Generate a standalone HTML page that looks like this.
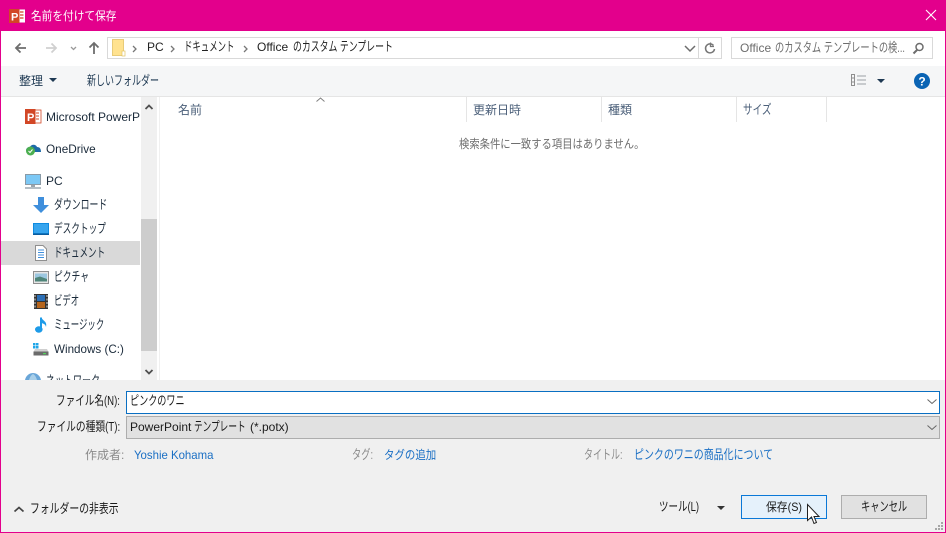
<!DOCTYPE html>
<html lang="ja"><head><meta charset="utf-8"><style>
html,body{margin:0;padding:0;width:946px;height:533px;overflow:hidden;background:#fff}
body{position:relative;font-family:"Liberation Sans","Noto Sans CJK JP",sans-serif;font-size:12px;color:#1a1a1a}
.a{position:absolute}
.t{position:absolute;white-space:nowrap;line-height:16px;height:16px;transform-origin:0 50%}
.k{font-size:13px}
svg{position:absolute;overflow:visible}
</style></head><body>
<!-- window frame -->
<div class="a" style="left:0;top:0;width:946px;height:31px;background:#e3008c"></div>
<div class="a" style="left:0;top:0;width:1px;height:533px;background:#e3008c"></div>
<div class="a" style="right:0;top:0;width:1px;height:533px;background:#e3008c"></div>
<div class="a" style="left:0;top:532px;width:946px;height:1px;background:#e3008c"></div>
<!-- title bar -->
<svg style="left:9px;top:8px" width="16" height="16"><rect x="6" y="1.500" width="10" height="13" fill="#fff"/><path d="M11 4h3.500M11 7h3.500M11 10h3.500" stroke="#d24726" stroke-width="1.200"/><rect x="0" y="1" width="10.500" height="14" fill="#d24726"/><text x="2" y="12.500" font-size="11" font-weight="bold" fill="#fff" font-family="Liberation Sans">P</text></svg>
<div class="t" style="left:31px;top:8px;color:#fff;transform:scaleX(.89)">名前を付けて保存</div>
<svg style="left:925px;top:9px" width="12" height="12"><path d="M1 1L11 11M11 1L1 11" stroke="#fff" stroke-width="1.100"/></svg>
<!-- nav -->
<svg style="left:14px;top:41px" width="100" height="14"><path d="M12 7H2M6.500 2.500L2 7l4.500 4.500" stroke="#6d6d6d" stroke-width="1.800" fill="none"/><path d="M32 7H42M37.500 2.500L42 7l-4.500 4.500" stroke="#d0d0d0" stroke-width="1.800" fill="none"/><path d="M57 6l2.500 2.500L62 6" stroke="#9a9a9a" stroke-width="1.300" fill="none"/><path d="M80 13V2M75.500 6.500L80 2l4.500 4.500" stroke="#6d6d6d" stroke-width="1.800" fill="none"/></svg>
<div class="a" style="left:107px;top:37px;width:591px;height:20px;border:1px solid #d9d9d9;background:#fff"></div>
<div class="a" style="left:698px;top:37px;width:22px;height:20px;border:1px solid #d9d9d9;background:#fff"></div>
<svg style="left:112px;top:39px" width="13" height="17"><path d="M0.500 0.500H11.500V16.500H0.500Z" fill="#ffe28f" stroke="#e8cb78"/><rect x="10" y="12" width="3" height="5" fill="#fff" stroke="#e3c463" stroke-width=".7"/></svg>
<svg style="left:132px;top:44px" width="260" height="10"><path d="M1 2l3 3-3 3" stroke="#777" stroke-width="1.300" fill="none"/><path d="M39 2l3 3-3 3" stroke="#777" stroke-width="1.300" fill="none"/><path d="M112 2l3 3-3 3" stroke="#777" stroke-width="1.300" fill="none"/></svg>
<div class="t" style="left:147px;top:39px;color:#222">PC</div>
<div class="t k" style="left:184px;top:39px;color:#222;transform:scaleX(.646)">ドキュメント</div>
<div class="t" style="left:257px;top:39px;color:#222">Office</div>
<div class="t k" style="left:293px;top:39px;color:#222;transform:scaleX(.683)">のカスタム テンプレート</div>
<svg style="left:684px;top:45px" width="12" height="8"><path d="M1 1l5 5 5-5" stroke="#6d6d6d" stroke-width="1.500" fill="none"/></svg>
<svg style="left:704px;top:42px" width="12" height="12"><path d="M9.500 3.500A4.500 4.500 0 1 0 10.500 7" stroke="#777" stroke-width="1.500" fill="none"/><path d="M6.500 0.500V4.500H10" stroke="#777" stroke-width="1.300" fill="none"/></svg>
<div class="a" style="left:731px;top:37px;width:200px;height:20px;border:1px solid #d9d9d9;background:#fff"></div>
<div class="t" style="left:740px;top:40px;color:#6d6d6d">Office</div>
<div class="t k" style="left:775px;top:40px;color:#6d6d6d;transform:scaleX(.71)">のカスタム テンプレートの検...</div>
<svg style="left:912px;top:42px" width="14" height="14"><circle cx="7.500" cy="5" r="3.500" stroke="#6d6d6d" stroke-width="1.500" fill="none"/><path d="M5 8l-3.500 3.500" stroke="#6d6d6d" stroke-width="2"/></svg>
<!-- toolbar -->
<div class="a" style="left:1px;top:66px;width:944px;height:30px;background:#f5f6f7"></div>
<div class="a" style="left:1px;top:96px;width:944px;height:1px;background:#e5e5e5"></div>
<div class="t" style="left:19px;top:73px;color:#1e3953">整理</div>
<svg style="left:49px;top:78px" width="8" height="5"><path d="M0 0H8L4 4Z" fill="#1e3953"/></svg>
<div class="t k" style="left:87px;top:73px;color:#1e3953;transform:scaleX(.692)">新しいフォルダー</div>
<svg style="left:851px;top:74px" width="16" height="13"><rect x=".5" y=".5" width="3" height="11" fill="none" stroke="#8f8f8f"/><path d="M0 4H4M0 8H4" stroke="#8f8f8f"/><path d="M6 2H15M6 6H15M6 10H15" stroke="#9aa0a6"/></svg>
<svg style="left:877px;top:79px" width="8" height="5"><path d="M0 0H8L4 4Z" fill="#1e3953"/></svg>
<svg style="left:914px;top:73px" width="16" height="16"><circle cx="8" cy="8" r="8" fill="#0a64b4"/><text x="8" y="12.500" text-anchor="middle" font-size="12" font-weight="bold" fill="#fff" font-family="Liberation Sans">?</text></svg>
<!-- sidebar -->
<svg style="left:25px;top:108px" width="16" height="17"><rect x="6" y="2" width="10" height="13" fill="#fff" stroke="#d24726" stroke-width=".8"/><path d="M11 5h3M11 8h3M11 11h3" stroke="#d24726"/><rect x="0" y="1" width="10.500" height="15" fill="#d24726"/><text x="2" y="13" font-size="11" font-weight="bold" fill="#fff" font-family="Liberation Sans">P</text></svg>
<div class="t" style="left:46px;top:109px;width:94px;overflow:hidden;color:#1a2a3a">Microsoft PowerPoint</div>
<svg style="left:25px;top:142px" width="17" height="14"><path d="M1 9C1 6 3 5 5 5 6 2 11 2 12 5 15 5 16 7 16 10H3Z" fill="#1d6aa8"/><circle cx="5.500" cy="9" r="4.500" fill="#4caf50"/><path d="M3.500 9l1.500 1.500L7.500 7.500" stroke="#fff" fill="none"/></svg>
<div class="t" style="left:46px;top:141px;color:#1a2a3a;transform:scaleX(.98)">OneDrive</div>
<svg style="left:25px;top:174px" width="16" height="15"><rect x=".5" y=".5" width="15" height="10" fill="#7cc8f5" stroke="#8a9aa6"/><rect x="6" y="11" width="4" height="2" fill="#9aa5ad"/><rect x="0" y="13" width="16" height="2" fill="#b4bec5"/></svg>
<div class="t" style="left:46px;top:173px;color:#1a2a3a">PC</div>
<svg style="left:33px;top:197px" width="16" height="17"><path d="M5 0H11V8H16L8 16 0 8H5Z" fill="#3f8fdc"/></svg>
<div class="t k" style="left:54px;top:197px;color:#1a2a3a;transform:scaleX(.683)">ダウンロード</div>
<svg style="left:33px;top:223px" width="16" height="12"><rect x="0" y="0" width="16" height="12" fill="#0f8be0"/><rect x="1" y="1" width="14" height="9" fill="#37a5ee"/><rect x="0" y="10.500" width="16" height="1.500" fill="#0b5c9e"/></svg>
<div class="t k" style="left:54px;top:221px;color:#1a2a3a;transform:scaleX(.665)">デスクトップ</div>
<div class="a" style="left:1px;top:241px;width:139px;height:24px;background:#d9d9d9"></div>
<svg style="left:35px;top:245px" width="12" height="16"><path d="M.5.500H8L11.500 4V15.500H.5Z" fill="#fff" stroke="#8f8f8f"/><path d="M3 5H9M3 7.500H9M3 10H9M3 12.500H9" stroke="#3f8fdc"/></svg>
<div class="t k" style="left:54px;top:245px;color:#1a2a3a;transform:scaleX(.655)">ドキュメント</div>
<svg style="left:33px;top:271px" width="16" height="13"><rect x=".5" y=".5" width="15" height="12" fill="#e6e6e6" stroke="#8f8f8f"/><rect x="2" y="2.500" width="12" height="8" fill="#9cc7e0"/><path d="M2 7L7 5.500 14 8V10.500H2Z" fill="#4f8579"/></svg>
<div class="t k" style="left:54px;top:269px;color:#1a2a3a;transform:scaleX(.674)">ピクチャ</div>
<svg style="left:34px;top:294px" width="14" height="15"><rect width="14" height="15" fill="#333"/><rect x="3" y="1" width="8" height="6" fill="#2c6fb5"/><rect x="3" y="8" width="8" height="6" fill="#b5651d"/><path d="M1 1v13M13 1v13" stroke="#ddd" stroke-dasharray="2 1.500"/></svg>
<div class="t k" style="left:54px;top:293px;color:#1a2a3a;transform:scaleX(.646)">ビデオ</div>
<svg style="left:35px;top:317px" width="12" height="16"><path d="M6 0.500V12.500" stroke="#1e9be8" stroke-width="2"/><ellipse cx="3.800" cy="12.500" rx="3.800" ry="3.200" fill="#1e9be8"/><path d="M6.500 0.500C7.500 4 12.500 4 11 10 10.500 7 8 6.500 6.500 6Z" fill="#1e9be8"/></svg>
<div class="t k" style="left:54px;top:317px;color:#1a2a3a;transform:scaleX(.646)">ミュージック</div>
<svg style="left:33px;top:343px" width="16" height="13"><rect x="0" y="0" width="2.500" height="2.500" fill="#1fa6e8"/><rect x="3" y="0" width="2.500" height="2.500" fill="#1fa6e8"/><rect x="0" y="3" width="2.500" height="2.500" fill="#1fa6e8"/><rect x="3" y="3" width="2.500" height="2.500" fill="#1fa6e8"/><path d="M2 6H14L15.500 9H.5Z" fill="#cfcfcf"/><rect x=".5" y="8.500" width="15" height="4" fill="#6b6b6b"/><rect x="10" y="10" width="3" height="1.200" fill="#52d35a"/></svg>
<div class="t" style="left:54px;top:341px;color:#1a2a3a;transform:scaleX(.97)">Windows (C:)</div>
<svg style="left:25px;top:373px" width="16" height="7"><path d="M0 7C1 2 5 0 8 0S15 2 16 7Z" fill="#6aa6d8"/><path d="M4 7C5 4 6 2 8 1 10 2 11 4 12 7" fill="#a9cfe9"/></svg>
<div class="t k" style="left:46px;top:373px;height:7px;overflow:hidden;color:#1a2a3a;transform:scaleX(.692)">ネットワーク</div>
<!-- scrollbar -->
<div class="a" style="left:141px;top:97px;width:16px;height:283px;background:#f0f0f0"></div>
<div class="a" style="left:141px;top:219px;width:16px;height:132px;background:#cdcdcd"></div>
<svg style="left:145px;top:104px" width="8" height="6"><path d="M.5 5L4 1.500 7.500 5" stroke="#505050" stroke-width="1.800" fill="none"/></svg>
<svg style="left:145px;top:369px" width="8" height="6"><path d="M.5 1L4 4.500 7.500 1" stroke="#505050" stroke-width="1.800" fill="none"/></svg>
<div class="a" style="left:159px;top:97px;width:1px;height:283px;background:#f0f0f0"></div>
<!-- headers -->
<div class="t" style="left:178px;top:102px;color:#4c607a">名前</div>
<svg style="left:316px;top:97px" width="9" height="5"><path d="M.5 4.500L4.500 1l4 3.500" stroke="#808080" fill="none"/></svg>
<div class="a" style="left:466px;top:97px;width:1px;height:25px;background:#e5e5e5"></div>
<div class="t" style="left:473px;top:102px;color:#4c607a">更新日時</div>
<div class="a" style="left:601px;top:97px;width:1px;height:25px;background:#e5e5e5"></div>
<div class="t" style="left:608px;top:102px;color:#4c607a">種類</div>
<div class="a" style="left:736px;top:97px;width:1px;height:25px;background:#e5e5e5"></div>
<div class="t k" style="left:743px;top:102px;color:#4c607a;transform:scaleX(.738)">サイズ</div>
<div class="a" style="left:826px;top:97px;width:1px;height:25px;background:#e5e5e5"></div>
<div class="t" style="left:459px;top:136px;color:#6d6d6d;transform:scaleX(.86)">検索条件に一致する項目はありません。</div>
<!-- bottom panel -->
<div class="a" style="left:1px;top:380px;width:944px;height:152px;background:#f0f0f0"></div>
<div class="t k" style="left:56px;top:393px;transform:scaleX(.738)">ファイル名(N):</div>
<div class="a" style="left:126px;top:391px;width:812px;height:21px;border:1px solid #0a6fc2;background:#fff"></div>
<div class="t k" style="left:130px;top:393px;transform:scaleX(.70)">ピンクのワニ</div>
<svg style="left:927px;top:399px" width="10" height="6"><path d="M.5.500L5 4.500 9.500.5" stroke="#666" fill="none"/></svg>
<div class="t k" style="left:37px;top:419px;transform:scaleX(.748)">ファイルの種類(T):</div>
<div class="a" style="left:126px;top:416px;width:812px;height:21px;border:1px solid #adadad;background:#e1e1e1"></div>
<div class="t" style="left:130px;top:419px">PowerPoint</div>
<div class="t k" style="left:194px;top:419px;transform:scaleX(.665)">テンプレート</div>
<div class="t" style="left:250px;top:419px">(*.potx)</div>
<svg style="left:927px;top:425px" width="10" height="6"><path d="M.5.500L5 4.500 9.500.5" stroke="#666" fill="none"/></svg>
<div class="t" style="left:85px;top:447px;color:#8a8a8a">作成者:</div>
<div class="t" style="left:134px;top:447px;color:#1a6fc4;transform:scaleX(.95)">Yoshie Kohama</div>
<div class="t k" style="left:352px;top:447px;color:#8a8a8a;transform:scaleX(.71)">タグ:</div>
<div class="t" style="left:384px;top:447px;color:#1a6fc4;transform:scaleX(.87)">タグの追加</div>
<div class="t k" style="left:584px;top:447px;color:#8a8a8a;transform:scaleX(.692)">タイトル:</div>
<div class="t k" style="left:634px;top:447px;color:#1a6fc4;transform:scaleX(.766)">ピンクのワニの商品化について</div>
<svg style="left:14px;top:506px" width="10" height="7"><path d="M.5 5.500L5 1.500 9.500 5.500" stroke="#444" stroke-width="1.700" fill="none"/></svg>
<div class="t k" style="left:30px;top:501px;transform:scaleX(.757)">フォルダーの非表示</div>
<div class="t k" style="left:659px;top:499px;transform:scaleX(.73)">ツール(L)</div>
<svg style="left:717px;top:506px" width="8" height="4"><path d="M0 0H8L4 4Z" fill="#333"/></svg>
<div class="a" style="left:741px;top:495px;width:84px;height:22px;border:1px solid #0a78d7;background:#e5f1fb"></div>
<div class="t" style="left:766px;top:499px;transform:scaleX(.9)">保存(S)</div>
<div class="a" style="left:841px;top:495px;width:84px;height:22px;border:1px solid #adadad;background:#e1e1e1"></div>
<div class="t k" style="left:861px;top:499px;transform:scaleX(.71)">キャンセル</div>
<svg style="left:807px;top:504px" width="13" height="21"><path d="M.5.500V16.500L4.500 13 7 19.500 9.500 18.500 7 12.500H12Z" fill="#fff" stroke="#222"/></svg>
<svg style="left:935px;top:522px" width="9" height="9" fill="#a6a6a6"><rect x="6" y="0" width="2" height="2"/><rect x="3" y="3" width="2" height="2"/><rect x="6" y="3" width="2" height="2"/><rect x="0" y="6" width="2" height="2"/><rect x="3" y="6" width="2" height="2"/><rect x="6" y="6" width="2" height="2"/></svg>
</body></html>
